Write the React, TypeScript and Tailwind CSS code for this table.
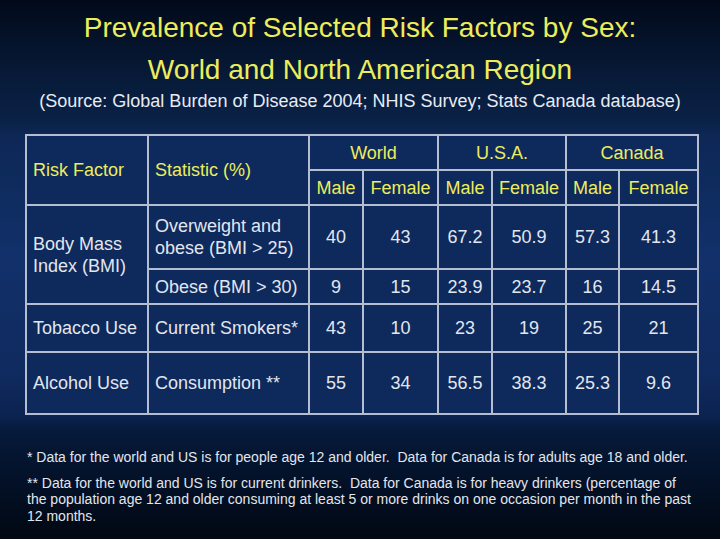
const rows = [
  { factor: 'Tobacco Use', stat: 'Current Smokers*', values: ['43', '10', '23', '19', '25', '21'], h: 'h-[48px]' },
  { factor: 'Alcohol Use', stat: 'Consumption **', values: ['55', '34', '56.5', '38.3', '25.3', '9.6'], h: 'h-[62px]' },
];

const cell = 'border-2 border-[#b4bed0] text-[18px] leading-[22px] align-middle';
const head = `${cell} text-[#eded5c]`;
const num = `${cell} text-center text-[#e2e6ee]`;

export default function App() {
  return (
    <div
      className="w-[720px] h-[539px] overflow-hidden bg-[linear-gradient(to_bottom,#020a1a_0%,#071a38_14%,#0a2248_23%,#0d2856_25%,#12306a_48%,#0f2a5e_70%,#0b2350_77%,#061a3a_80%,#031026_90%,#010812_100%)]"
      style={{ fontFamily: '"Liberation Sans", Arial, sans-serif' }}
    >
      <div className="pt-[7px] text-center">
        <h1 className="text-[28px] leading-[42px] text-[#eded5c]">
          Prevalence of Selected Risk Factors by Sex:
          <br />
          World and North American Region
        </h1>
        <p className="text-[18px] leading-[20px] text-[#e8ecf4]">
          (Source: Global Burden of Disease 2004; NHIS Survey; Stats Canada database)
        </p>
      </div>

      <div className="pl-[25px] mt-[23px]">
        <table className="w-[672px] table-fixed border-collapse bg-[#0e295c]">
          <colgroup>
            <col className="w-[122px]" />
            <col className="w-[161px]" />
            <col className="w-[54px]" />
            <col className="w-[75px]" />
            <col className="w-[54px]" />
            <col className="w-[74px]" />
            <col className="w-[53px]" />
            <col className="w-[79px]" />
          </colgroup>
          <tbody>
            <tr className="h-[35px]">
              <td rowSpan={2} className={`${head} pl-[6px]`}>Risk Factor</td>
              <td rowSpan={2} className={`${head} pl-[6px]`}>Statistic (%)</td>
              <td colSpan={2} className={`${head} text-center`}>World</td>
              <td colSpan={2} className={`${head} text-center`}>U.S.A.</td>
              <td colSpan={2} className={`${head} text-center`}>Canada</td>
            </tr>
            <tr className="h-[35px]">
              {['Male', 'Female', 'Male', 'Female', 'Male', 'Female'].map((s, i) => (
                <td key={i} className={`${head} text-center`}>{s}</td>
              ))}
            </tr>
            <tr className="h-[64px]">
              <td rowSpan={2} className={`${cell} pl-[6px] text-[#e2e6ee]`}>
                Body Mass
                <br />
                Index (BMI)
              </td>
              <td className={`${cell} pl-[6px] text-[#e2e6ee]`}>
                Overweight and
                <br />
                obese (BMI &gt; 25)
              </td>
              {['40', '43', '67.2', '50.9', '57.3', '41.3'].map((v, i) => (
                <td key={i} className={num}>{v}</td>
              ))}
            </tr>
            <tr className="h-[35px]">
              <td className={`${cell} pl-[6px] text-[#e2e6ee]`}>Obese (BMI &gt; 30)</td>
              {['9', '15', '23.9', '23.7', '16', '14.5'].map((v, i) => (
                <td key={i} className={num}>{v}</td>
              ))}
            </tr>
            {rows.map((r) => (
              <tr key={r.factor} className={r.h}>
                <td className={`${cell} pl-[6px] text-[#e2e6ee]`}>{r.factor}</td>
                <td className={`${cell} pl-[6px] text-[#e2e6ee]`}>{r.stat}</td>
                {r.values.map((v, i) => (
                  <td key={i} className={num}>{v}</td>
                ))}
              </tr>
            ))}
          </tbody>
        </table>
      </div>

      <div className="pl-[27px] mt-[34px] text-[14px] leading-[16.5px] text-[#e2e6ee]">
        <p>* Data for the world and US is for people age 12 and older.&nbsp; Data for Canada is for adults age 18 and older.</p>
        <p className="mt-[9px]">
          ** Data for the world and US is for current drinkers.&nbsp; Data for Canada is for heavy drinkers (percentage of
          <br />
          the population age 12 and older consuming at least 5 or more drinks on one occasion per month in the past
          <br />
          12 months.
        </p>
      </div>
    </div>
  );
}
